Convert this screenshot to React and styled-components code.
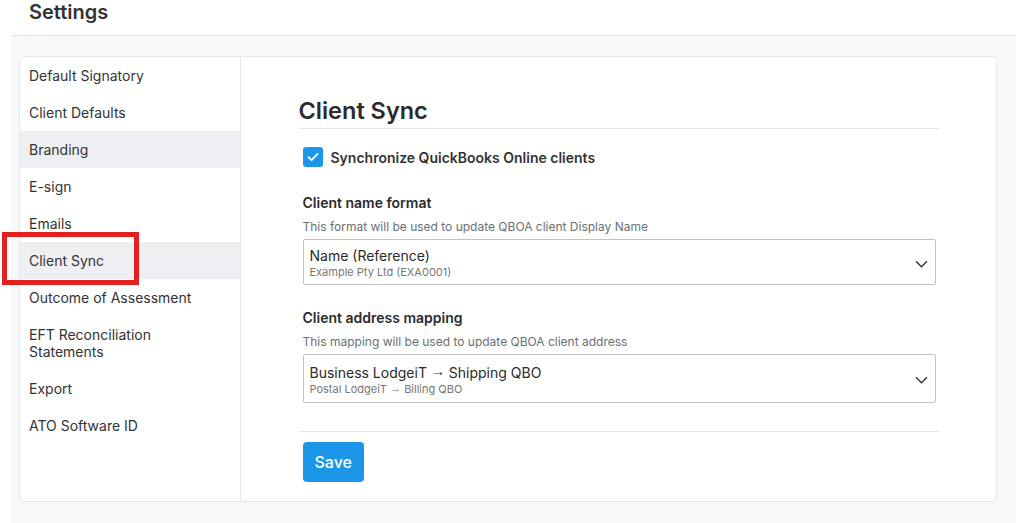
import React from 'react';
import styled, { createGlobalStyle } from 'styled-components';

const navItems = [
  'Default Signatory',
  'Client Defaults',
  'Branding',
  'E-sign',
  'Emails',
  'Client Sync',
  'Outcome of Assessment',
  'EFT Reconciliation Statements',
  'Export',
  'ATO Software ID',
];

const Chevron = () => (
  <svg width="13" height="8" viewBox="0 0 13 8" fill="none">
    <path d="M1 1.2l5.5 5.5L12 1.2" stroke="#333" strokeWidth="1.4" />
  </svg>
);

const Check = () => (
  <svg width="12" height="10" viewBox="0 0 12 10" fill="none">
    <path d="M1.5 5.2l3 3L10.5 2" stroke="#fff" strokeWidth="1.8" strokeLinecap="round" strokeLinejoin="round" />
  </svg>
);

export default function App() {
  return (
    <>
      <GlobalStyle />
      <Page>
        <Header>
          <Title>Settings</Title>
        </Header>
        <Main>
          <Card>
            <Sidebar>
              {navItems.map((item) => (
                <NavItem
                  key={item}
                  $active={item === 'Branding' || item === 'Client Sync'}
                >
                  {item}
                  {item === 'Client Sync' && <Highlight />}
                </NavItem>
              ))}
            </Sidebar>
            <Content>
              <Column>
                <Heading>Client Sync</Heading>
                <Form>
                  <CheckRow>
                    <CheckBox>
                      <Check />
                    </CheckBox>
                    <CheckLabel>Synchronize QuickBooks Online clients</CheckLabel>
                  </CheckRow>

                  <Field $first>
                    <Label>Client name format</Label>
                    <Help>This format will be used to update QBOA client Display Name</Help>
                    <Select>
                      <SelectText>
                        <Primary>Name (Reference)</Primary>
                        <Secondary>Example Pty Ltd (EXA0001)</Secondary>
                      </SelectText>
                      <Chevron />
                    </Select>
                  </Field>

                  <Field>
                    <Label>Client address mapping</Label>
                    <Help>This mapping will be used to update QBOA client address</Help>
                    <Select $tall>
                      <SelectText>
                        <Primary>Business LodgeiT <Arrow>→</Arrow> Shipping QBO</Primary>
                        <Secondary>Postal LodgeiT <Arrow>→</Arrow> Billing QBO</Secondary>
                      </SelectText>
                      <Chevron />
                    </Select>
                  </Field>
                </Form>
                <Footer>
                  <SaveButton>Save</SaveButton>
                </Footer>
              </Column>
            </Content>
          </Card>
        </Main>
      </Page>
    </>
  );
}

const GlobalStyle = createGlobalStyle`
  html, body { margin:0; padding:0; background:#fff; }
  body { font-family: Inter, "Noto Sans", "Liberation Sans", sans-serif; color:#333; }
  * { box-sizing:border-box; }
`

const Page = styled.div`
  height:523px; display:flex; flex-direction:column; overflow:hidden;
`
const Header = styled.header`
  height:36px; margin-left:11px; padding:2px 0 0 18px; border-bottom:1px solid #e3e4e6; background:#fff;
`
const Title = styled.h1`
  margin:0; font-size:20px; line-height:20px; font-weight:600; color:#333;
`
const Main = styled.main`
  flex:1; margin-left:11px; background:#f7f8fa; padding:20px 19px 21px 8px; display:flex;
`
const Card = styled.div`
  flex:1; display:flex; background:#fff; border:1px solid #e5e7eb; border-radius:6px;
`
const Sidebar = styled.nav`
  width:221px; flex:none; border-right:1px solid #e5e7eb; display:flex; flex-direction:column;
`
const NavItem = styled.div`
  position:relative; padding:10px 20px 10px 9px; font-size:14px; line-height:17px; color:#333;
  background:${(p) => (p.$active ? '#eeeff2' : 'transparent')};
`
const Highlight = styled.span`
  position:absolute; left:-18px; top:-10px; width:137px; height:53px;
  border:5px solid #e3201f;
`
const Content = styled.section`
  flex:1; padding-top:40px;
`
const Column = styled.div`
  width:640px; margin:0 auto;
`
const Heading = styled.h2`
  margin:0; font-size:23.5px; line-height:28px; font-weight:600; color:#2b2b2b;
  padding-bottom:3px; border-bottom:1px solid #e3e4e6;
`
const Form = styled.div`
  padding:18px 3px 0 4px;
`
const CheckRow = styled.label`
  display:flex; align-items:center; gap:8px;
`
const CheckBox = styled.span`
  width:20px; height:20px; border-radius:3px; background:#1b96e8;
  display:flex; align-items:center; justify-content:center;
`
const CheckLabel = styled.span`
  font-size:14px; line-height:17px; font-weight:600; color:#333;
`
const Field = styled.div`
  margin-top:${(p) => (p.$first ? '27px' : '24px')};
`
const Label = styled.div`
  font-size:14px; line-height:17px; font-weight:600; color:#2b2b2b; margin-bottom:8px;
`
const Help = styled.div`
  font-size:12px; line-height:15px; color:#6b6f76; margin-bottom:5px;
`
const Select = styled.div`
  display:flex; align-items:center; justify-content:space-between;
  height:${(p) => (p.$tall ? '49px' : '46px')};
  padding:${(p) => (p.$tall ? '3px 7px 0 6px' : '3px 7px 0 6px')};
  border:1px solid #c3c3c3; border-radius:2px; background:#fff;
`
const SelectText = styled.div`
  display:flex; flex-direction:column;
`
const Primary = styled.span`
  font-size:14px; line-height:18px; color:#2b2b2b;
`
const Secondary = styled.span`
  font-size:11px; line-height:15px; color:#777;
`
const Arrow = styled.span`
  position:relative; top:-0.08em; font-family:"Liberation Sans", Arial, sans-serif;
`
const Footer = styled.div`
  margin-top:28px; border-top:1px solid #e3e4e6; padding:10px 0 0 4px;
`
const SaveButton = styled.button`
  height:40px; padding:0 12px; border:none; border-radius:4px; background:#1b96e8;
  color:#fff; font-family:inherit; font-size:16px; font-weight:500;
`
